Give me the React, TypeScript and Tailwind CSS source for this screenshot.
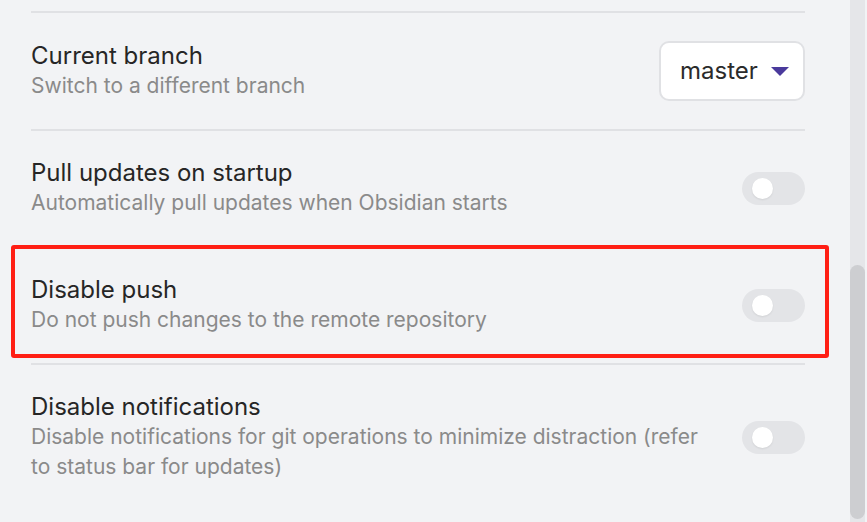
import React from "react";

const Toggle = () => {
  return (
    <div className="w-[63px] h-[33px] rounded-full bg-[#e3e4e7] shrink-0 flex items-center pl-[10px]">
      <div className="w-[21px] h-[21px] rounded-full bg-white shadow-[0_1px_2px_rgba(0,0,0,0.08)]" />
    </div>
  );
};

const Dropdown = () => {
  return (
    <div className="w-[146px] h-[60px] rounded-[10px] bg-white border-2 border-[#e0e1e4] shrink-0 flex items-center pl-[19px] gap-[13px]">
      <span className="text-[24px] text-[#2b2b2b]">master</span>
      <svg width="18" height="9" viewBox="0 0 18 9">
        <polygon points="0,0 18,0 9,9" fill="#4a3a9c" />
      </svg>
    </div>
  );
};

const Row = ({
  title,
  desc,
  control,
}: {
  title: string;
  desc: string;
  control: React.ReactNode;
}) => {
  return (
    <div className="border-t-2 border-[#e0e1e4] py-[28px] flex items-center gap-8">
      <div className="flex-1">
        <div className="text-[24px] leading-[28px] text-[#262626]">{title}</div>
        <div className="text-[21px] leading-[30px] text-[#8a8a8a] mt-[1px]">{desc}</div>
      </div>
      {control}
    </div>
  );
};

export default function App() {
  return (
    <div
      className="relative w-[867px] h-[522px] bg-[#f2f3f5] flex overflow-hidden"
      style={{ fontFamily: "Inter, 'Noto Sans', sans-serif" }}
    >
      <div className="w-[774px] ml-[31px] pt-[11px]">
        <Row
          title="Current branch"
          desc="Switch to a different branch"
          control={<Dropdown />}
        />
        <Row
          title="Pull updates on startup"
          desc="Automatically pull updates when Obsidian starts"
          control={<Toggle />}
        />
        <Row
          title="Disable push"
          desc="Do not push changes to the remote repository"
          control={<Toggle />}
        />
        <Row
          title="Disable notifications"
          desc="Disable notifications for git operations to minimize distraction (refer to status bar for updates)"
          control={<Toggle />}
        />
      </div>
      <div className="flex-1" />
      <div className="w-[15px] mr-[2px] bg-[#e5e6e9] pt-[265px]">
        <div className="h-[254px] rounded-full bg-[#cdced1]" />
      </div>
      <div className="absolute left-[11px] top-[245px] w-[818px] h-[113px] border-4 border-[#ff1e14] rounded-[3px]" />
    </div>
  );
}
